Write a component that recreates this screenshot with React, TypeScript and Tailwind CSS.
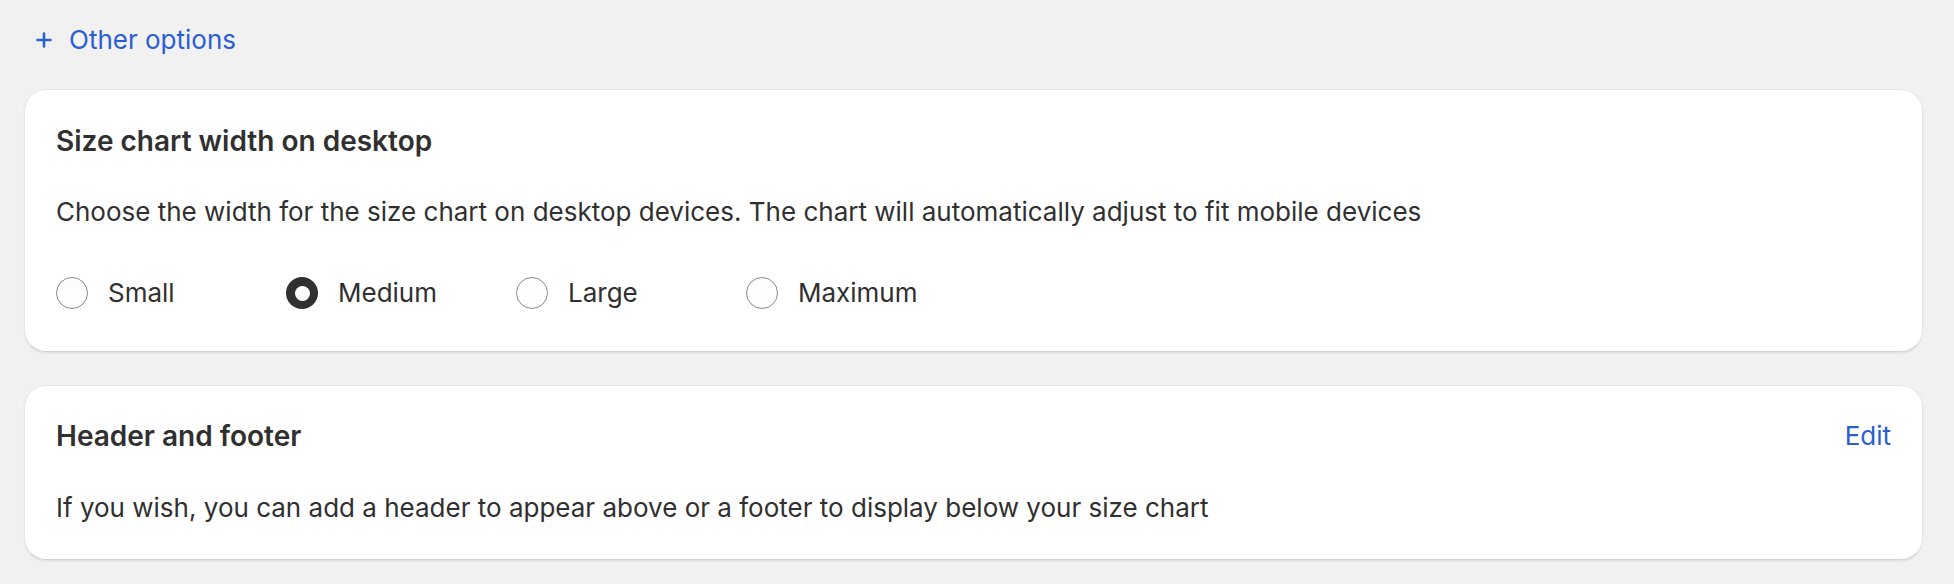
import { useState } from "react";

const OPTIONS = ["Small", "Medium", "Large", "Maximum"];

function Radio({ checked }: { checked: boolean }) {
  return checked ? (
    <span className="flex h-[32px] w-[32px] shrink-0 items-center justify-center rounded-full bg-[#303030]">
      <span className="h-[15px] w-[15px] rounded-full bg-white" />
    </span>
  ) : (
    <span className="h-[32px] w-[32px] shrink-0 rounded-full border border-[#8a8a8a] bg-[#fdfdfd]" />
  );
}

function Card({ children }: { children: React.ReactNode }) {
  return (
    <div className="rounded-[22px] border border-[#e6e6e6] border-b-[#d2d2d2] bg-white shadow-[0_2px_2px_rgba(0,0,0,0.06)]">
      {children}
    </div>
  );
}

export default function App() {
  const [size, setSize] = useState("Medium");

  return (
    <div
      className="min-h-[584px] bg-[#f1f1f1] pt-[20px] pr-[31px] pl-[24px] text-[#303030]"
      style={{ fontFamily: "Inter, 'Noto Sans', sans-serif" }}
    >
      <button
        type="button"
        className="flex items-center gap-[17px] pl-[12px] text-[26px] leading-[40px] text-[#2a5fd4]"
      >
        <svg width="16" height="16" viewBox="0 0 16 16" fill="none">
          <path d="M8 1.5v13M1.5 8h13" stroke="currentColor" strokeWidth="2.6" strokeLinecap="round" />
        </svg>
        Other options
      </button>

      <div className="mt-[29px] flex flex-col gap-[33px]">
        <Card>
          <div className="px-[31px] pt-[31px] pb-[38px]">
            <h2 className="text-[28px] font-semibold leading-[40px]">Size chart width on desktop</h2>
            <p className="mt-[31px] text-[26px] leading-[40px]">
              Choose the width for the size chart on desktop devices. The chart will automatically adjust to fit mobile devices
            </p>
            <div className="mt-[41px] flex">
              {OPTIONS.map((o) => (
                <label
                  key={o}
                  onClick={() => setSize(o)}
                  className="flex w-[230px] cursor-pointer items-center gap-[20px] text-[26px] leading-[40px]"
                >
                  <Radio checked={size === o} />
                  {o}
                </label>
              ))}
            </div>
          </div>
        </Card>

        <Card>
          <div className="px-[31px] pt-[30px] pb-[31px]">
            <div className="flex items-center justify-between">
              <h2 className="text-[28px] font-semibold leading-[40px]">Header and footer</h2>
              <button type="button" className="text-[26px] leading-[40px] text-[#2a5fd4]">
                Edit
              </button>
            </div>
            <p className="mt-[32px] text-[26px] leading-[40px]">
              If you wish, you can add a header to appear above or a footer to display below your size chart
            </p>
          </div>
        </Card>
      </div>
    </div>
  );
}
